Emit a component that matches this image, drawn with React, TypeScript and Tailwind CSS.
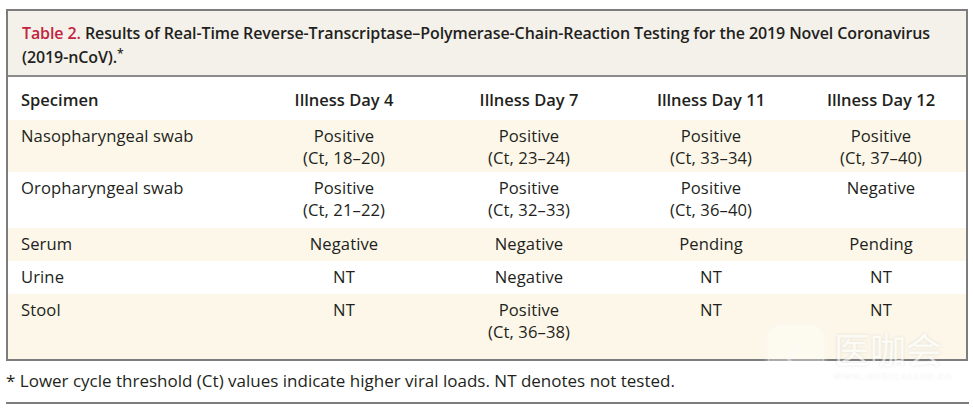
import React from "react";

const font = { fontFamily: '"Open Sans", "Noto Sans", sans-serif' };

type Row = { name: string; cells: string[][]; h: string; bg: string };

const rows: Row[] = [
  {
    name: "Nasopharyngeal swab",
    cells: [["Positive", "(Ct, 18–20)"], ["Positive", "(Ct, 23–24)"], ["Positive", "(Ct, 33–34)"], ["Positive", "(Ct, 37–40)"]],
    h: "h-[52px]",
    bg: "bg-[#fcf7e9]",
  },
  {
    name: "Oropharyngeal swab",
    cells: [["Positive", "(Ct, 21–22)"], ["Positive", "(Ct, 32–33)"], ["Positive", "(Ct, 36–40)"], ["Negative"]],
    h: "h-[56px]",
    bg: "bg-white",
  },
  {
    name: "Serum",
    cells: [["Negative"], ["Negative"], ["Pending"], ["Pending"]],
    h: "h-[33px]",
    bg: "bg-[#fcf7e9]",
  },
  {
    name: "Urine",
    cells: [["NT"], ["Negative"], ["NT"], ["NT"]],
    h: "h-[33px]",
    bg: "bg-white",
  },
  {
    name: "Stool",
    cells: [["NT"], ["Positive", "(Ct, 36–38)"], ["NT"], ["NT"]],
    h: "h-[65px]",
    bg: "bg-[#fcf7e9]",
  },
];

const cols = "grid grid-cols-[248px_176px_194px_170px_1fr]";

export default function App() {
  return (
    <div className="relative w-[973px] h-[411px] bg-white text-[#231f20] overflow-hidden" style={font}>
      <div className="pt-[9px] pl-[6px]">
        <div className="w-[962px] border-2 border-[#7d7d7d]">
          <div className="bg-[#f4f1eb] pl-[14px] pr-[10px] pt-[10px] pb-[6px] text-[16px] leading-[24px] font-semibold tracking-[-0.1px] border-b-2 border-[#8a8a8a]">
            <span className="text-[#c2243f]">Table 2.</span> Results of Real-Time Reverse-Transcriptase–Polymerase-Chain-Reaction Testing for the 2019 Novel Coronavirus (2019-nCoV).
            <span className="inline-block text-[12px] leading-[12px] -translate-y-[5px]">*</span>
          </div>
          <div className={`${cols} h-[43px] pt-[12px] text-[16.5px] leading-[22px] font-semibold bg-white`}>
            <div className="pl-[13px]">Specimen</div>
            <div className="text-center">Illness Day 4</div>
            <div className="text-center">Illness Day 7</div>
            <div className="text-center">Illness Day 11</div>
            <div className="text-center">Illness Day 12</div>
          </div>
          {rows.map((r) => (
            <div key={r.name} className={`${cols} ${r.h} ${r.bg} pt-[5px] text-[16.6px] leading-[22px] tracking-[0.1px]`}>
              <div className="pl-[13px]">{r.name}</div>
              {r.cells.map((c, i) => (
                <div key={i} className="text-center">
                  {c.map((l, j) => (
                    <div key={j}>{l}</div>
                  ))}
                </div>
              ))}
            </div>
          ))}
        </div>
        <div className="mt-[9px] text-[17px] leading-[22px]">* Lower cycle threshold (Ct) values indicate higher viral loads. NT denotes not tested.</div>
        <div className="mt-[10px] w-[963px] h-[2px] bg-[#7d7d7d]" />
      </div>
      {/* watermark */}
      <div className="absolute left-[768px] top-[326px] flex items-center gap-[10px] opacity-60">
        <div className="w-[56px] h-[58px] rounded-[14px] bg-white/60 border border-white/80 shadow-[0_0_6px_rgba(255,255,255,0.9)] flex items-center justify-center">
          <svg width="34" height="34" viewBox="0 0 34 34" fill="none" stroke="#ffffff" strokeWidth="3" strokeLinecap="round">
            <path d="M22 6 L8 18 L14 28" />
            <path d="M18 12 L14 17" />
          </svg>
        </div>
        <div className="flex flex-col">
          <div className="text-[36px] leading-[38px] text-white [text-shadow:0_0_3px_rgba(180,180,180,0.6)]" style={{ fontFamily: '"Noto Sans CJK SC", sans-serif' }}>
            医咖会
          </div>
          <div className="mt-[4px] text-[8px] leading-[10px] tracking-[2px] text-white/90 [text-shadow:0_0_2px_rgba(180,180,180,0.5)]">WWW.MEDICALLAB.CN</div>
        </div>
      </div>
    </div>
  );
}
